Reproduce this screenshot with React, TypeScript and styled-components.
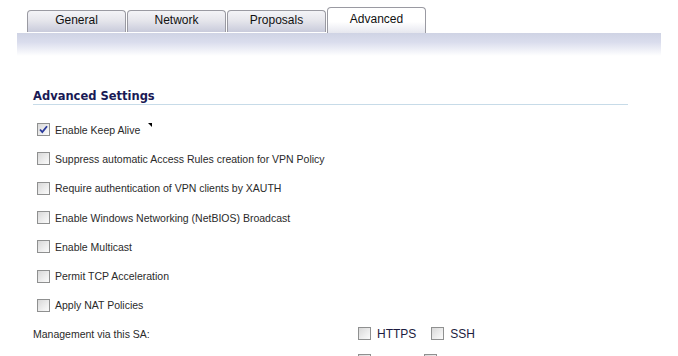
import React from "react";
import styled, { createGlobalStyle } from "styled-components";

const GlobalStyle = createGlobalStyle`
  body {
    margin: 0;
    background: #ffffff;
    font-family: "Liberation Sans", Arial, sans-serif;
  }
`;

const TABS = ["General", "Network", "Proposals", "Advanced"];

const OPTIONS = [
  { label: "Enable Keep Alive", checked: true, marker: true },
  { label: "Suppress automatic Access Rules creation for VPN Policy" },
  { label: "Require authentication of VPN clients by XAUTH" },
  { label: "Enable Windows Networking (NetBIOS) Broadcast" },
  { label: "Enable Multicast" },
  { label: "Permit TCP Acceleration" },
  { label: "Apply NAT Policies" },
];

const Checkbox = ({ checked }: { checked?: boolean }) => (
  <Box>
    {checked && (
      <svg width="11" height="11" viewBox="0 0 11 11">
        <path d="M2 5.5 L4.3 8 L9 2.2" fill="none" stroke="#2a3a9c" strokeWidth="1.8" />
      </svg>
    )}
  </Box>
);

const App = () => {
  // Main return
  return (
    <Page>
      <GlobalStyle />
      <TabBar>
        {TABS.map((tab) => (
          <Tab key={tab} active={tab === "Advanced"}>
            {tab}
          </Tab>
        ))}
      </TabBar>
      <Band />
      <Content>
        <Heading>Advanced Settings</Heading>
        <List>
          {OPTIONS.map((opt) => (
            <Option key={opt.label}>
              <Checkbox checked={opt.checked} />
              <Label>{opt.label}</Label>
              {opt.marker && <Marker />}
            </Option>
          ))}
        </List>
        <FieldRow>
          <FieldLabel>Management via this SA:</FieldLabel>
          <Choices>
            <Choice>
              <Checkbox />
              <ChoiceText>HTTPS</ChoiceText>
            </Choice>
            <Choice>
              <Checkbox />
              <ChoiceText>SSH</ChoiceText>
            </Choice>
          </Choices>
        </FieldRow>
        <FieldRow>
          <FieldLabel />
          <Choices>
            <Choice wide>
              <Checkbox />
            </Choice>
            <Choice>
              <Checkbox />
            </Choice>
          </Choices>
        </FieldRow>
      </Content>
    </Page>
  );
};

export default App;

const Page = styled.div`
  width: 678px;
  height: 356px;
  overflow: hidden;
  background: #ffffff;
`;

const TabBar = styled.div`
  display: flex;
  align-items: flex-end;
  gap: 1px;
  height: 33px;
  padding-left: 27px;
`;

const Tab = styled.div<{ active?: boolean }>`
  box-sizing: border-box;
  width: 99px;
  height: ${({ active }) => (active ? "26px" : "22px")};
  border: 1px solid #9a9aa2;
  border-bottom: none;
  border-radius: 4px 4px 0 0;
  background: ${({ active }) =>
    active
      ? "linear-gradient(#ffffff 0%, #ffffff 55%, #e6e7ef 100%)"
      : "linear-gradient(#f4f4f7 0%, #e6e6ec 45%, #c9cbdb 100%)"};
  color: #111111;
  font-size: 12px;
  text-align: center;
  line-height: ${({ active }) => (active ? "23px" : "18px")};
  margin-bottom: ${({ active }) => (active ? "0" : "1px")};
`;

const Band = styled.div`
  height: 23px;
  margin: 0 17px;
  background: linear-gradient(#cfd3e4 0%, #dadded 40%, #ffffff 100%);
`;

const Content = styled.div`
  padding: 33px 50px 0 33px;
`;

const Heading = styled.div`
  font-family: "DejaVu Sans", Verdana, sans-serif;
  font-weight: bold;
  font-size: 11.5px;
  color: #1a1a55;
  padding-bottom: 1px;
  border-bottom: 1px solid #c7dbe8;
  width: 595px;
`;

const List = styled.div`
  display: flex;
  flex-direction: column;
  padding-top: 10px;
  padding-left: 4px;
`;

const Option = styled.div`
  display: flex;
  align-items: center;
  height: 29.3px;
`;

const Box = styled.span`
  box-sizing: border-box;
  display: inline-flex;
  align-items: center;
  justify-content: center;
  width: 13px;
  height: 13px;
  border: 1px solid #8f9090;
  background: linear-gradient(135deg, #d8d8d8 0%, #eeeeee 60%, #fbfbfb 100%);
  flex-shrink: 0;
`;

const Label = styled.span`
  margin-left: 5px;
  font-family: "Liberation Sans", Tahoma, sans-serif;
  font-size: 10.5px;
  color: #2a2a2a;
`;

const Marker = styled.span`
  position: relative;
  top: -5px;
  left: 8px;
  width: 0;
  height: 0;
  border-top: 4px solid #000000;
  border-left: 4px solid transparent;
`;

const FieldRow = styled.div`
  display: flex;
  align-items: center;
  height: 27px;
`;

const FieldLabel = styled.span`
  width: 325px;
  font-size: 10.5px;
  color: #2a2a2a;
`;

const Choices = styled.div`
  display: flex;
  align-items: center;
`;

const Choice = styled.span<{ wide?: boolean }>`
  display: inline-flex;
  align-items: center;
  width: ${({ wide }) => (wide ? "51px" : "auto")};
  margin-right: 15px;
`;

const ChoiceText = styled.span`
  margin-left: 6px;
  font-size: 12px;
  color: #1c1c40;
`;
